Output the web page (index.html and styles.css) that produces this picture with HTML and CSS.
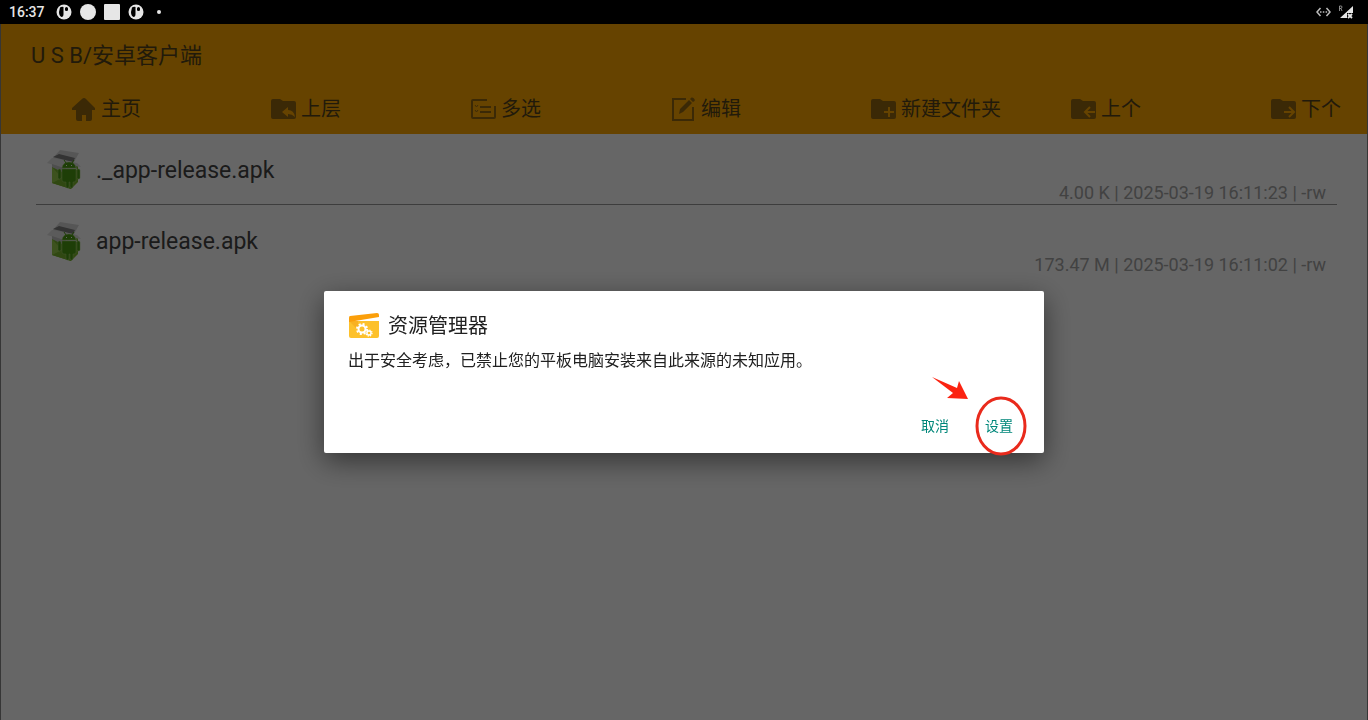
FILE: index.html
```html
<!DOCTYPE html>
<html lang="zh-CN">
<head>
    <meta charset="UTF-8">
    <meta name="viewport" content="width=device-width, initial-scale=1.0">
    <title>资源管理器</title>
    <link rel="stylesheet" href="styles.css">
</head>
<body>
    <!-- Shared icon shapes -->
    <svg class="defs" width="0" height="0">
        <symbol id="folder" viewBox="0 0 25 20">
            <path d="M2 0H9L12 2H23Q25 2 25 4V18Q25 20 23 20H2Q0 20 0 18V2Q0 0 2 0Z"/>
        </symbol>
        <symbol id="notice" viewBox="0 0 16 16">
            <circle cx="8" cy="8" r="7.5" fill="#e6e6e6"/>
            <path d="M4 3.500Q5.500 2.500 7.500 3V10Q7.500 13 5.500 13Q3 12 3 8ZM9 4.500Q9 3 10.500 3Q12 3 12 4.500V6Q12 7 10.500 7Q9 7 9 6Z" fill="#000"/>
        </symbol>
        <symbol id="apk" viewBox="0 0 34 40">
            <path d="M5 17L26 12L31 16V32L24 39L5 33Z" fill="#7bb62c"/>
            <path d="M5 17L24 23V39L5 33Z" fill="#79b52d"/>
            <path d="M5 17L15 28L5 33Z" fill="#99cc4c"/>
            <path d="M5 9L28 13L30 20L22 19L5 17Z" fill="#dedede"/>
            <path d="M5 9L13 0L32 3L27 12Z" fill="#d8d8d8"/>
            <path d="M6 7L12 4L28 8L26 12Z" fill="#808080"/>
            <path d="M5 8L0 13L20 19L25 12Z" fill="#e4e4e4"/>
            <path d="M5 17V14L20 19L17 23Z" fill="#c4c4c4"/>
            <path d="M25 12L30 13L34 17L27 16Z" fill="#dedede"/>
            <g fill="#4b9b12" stroke="#a3cf73" stroke-width=".5">
                <path d="M15 18Q16 12 22 12Q28 12 29 18Z"/>
                <path d="M15 19H29V30Q29 32 27 32H26V36Q26 38 24.500 38Q23 38 23 36V32H22V36Q22 38 20.500 38Q19 38 19 36V32H17Q15 32 15 30Z"/>
                <rect x="11" y="19" width="3" height="10" rx="1.500"/>
                <rect x="30" y="19" width="3" height="10" rx="1.500"/>
            </g>
            <path d="M19 13L17 10M25 13L27 10" stroke="#4b9b12"/>
            <path d="M19 15.500h1M24 15.500h1" stroke="#fff"/>
        </symbol>
    </svg>

    <header class="status-bar">
        <span class="clock">16:37</span>
        <svg width="16" height="16"><use href="#notice"/></svg>
        <svg width="16" height="16"><circle cx="8" cy="8" r="8" fill="#e6e6e6"/></svg>
        <svg width="16" height="16"><rect width="16" height="16" rx="1" fill="#e6e6e6"/></svg>
        <svg width="16" height="16"><use href="#notice"/></svg>
        <svg width="14" height="16"><circle cx="7" cy="8" r="2" fill="#e6e6e6"/></svg>
        <svg class="network" width="15" height="10" viewBox="0 0 15 10" fill="none" stroke="#bbb" stroke-width="1.500">
            <path d="M4.500 1L1 5L4.500 9M10.500 1L14 5L10.500 9M4 5h1.500M6.800 5h1.500M9.600 5h1.500"/>
        </svg>
        <svg width="14" height="14" viewBox="0 0 14 14">
            <path d="M14 1V8H8V13H1Z" fill="#e6e6e6"/>
            <path d="M9 9L13 13M13 9L9 13" stroke="#e6e6e6" stroke-width="1.800"/>
            <path d="M.5 6V1H2Q3 1 3 2T2 3.500H.5M2 3.500L3 6" fill="none" stroke="#aaa" stroke-width=".8"/>
        </svg>
    </header>

    <main class="app">
        <div class="app-bar">
            <h1>U S B/安卓客户端</h1>
            <nav class="toolbar">
                <button type="button">
                    <svg width="25" height="24" viewBox="0 0 25 24"><path d="M13 1Q14 1 15 2L24 11V13H21V22Q21 24 19 24H15V18H11V24H7Q5 24 5 22V13H1V11L11 2Q12 1 13 1Z"/></svg>
                    主页
                </button>
                <button type="button">
                    <svg width="25" height="20" viewBox="0 0 25 20"><use href="#folder"/><path class="cut" d="M17 8V11Q23 11 24 18Q21 15 17 15V18L11 13Z"/></svg>
                    上层
                </button>
                <button type="button">
                    <svg width="25" height="20" viewBox="0 0 25 20"><path class="line" d="M16 1H2Q1 1 1 2V18Q1 19 2 19H23Q24 19 24 18V7M9 8H20M9 13H20"/><path d="M4 6L5.500 8L7 6M4 11L5.500 13L7 11" fill="none" stroke="#9d6b11"/></svg>
                    多选
                </button>
                <button type="button">
                    <svg width="25" height="24" viewBox="0 0 25 24"><path class="line" d="M15 2H2V23H22V10"/><path d="M8 17L9 12L18 3L21 6L12 15ZM19 2L20.500 .5Q21.500 0 23 1.500T23.500 4L22 5Z"/></svg>
                    编辑
                </button>
                <button type="button">
                    <svg width="25" height="20" viewBox="0 0 25 20"><use href="#folder"/><path class="cut-line" d="M18 8V18M13 13H23"/></svg>
                    新建文件夹
                </button>
                <button type="button">
                    <svg width="25" height="20" viewBox="0 0 25 20"><use href="#folder"/><path class="cut-line" d="M19 8L14 13L19 18M14 13H24"/></svg>
                    上个
                </button>
                <button type="button">
                    <svg width="25" height="20" viewBox="0 0 25 20"><use href="#folder"/><path class="cut-line" d="M18 8L23 13L18 18M13 13H23"/></svg>
                    下个
                </button>
            </nav>
        </div>

        <ul class="files">
            <li>
                <svg width="34" height="40"><use href="#apk"/></svg>
                <span class="name">._app-release.apk</span>
                <span class="meta">4.00 K | 2025-03-19 16:11:23 | -rw</span>
            </li>
            <li>
                <svg width="34" height="40"><use href="#apk"/></svg>
                <span class="name">app-release.apk</span>
                <span class="meta">173.47 M | 2025-03-19 16:11:02 | -rw</span>
            </li>
        </ul>
    </main>

    <div class="scrim">
        <section class="dialog" role="dialog" aria-labelledby="dialogTitle">
            <div class="dialog-head">
                <svg width="32" height="26" viewBox="0 0 32 26">
                    <path d="M1 8H31V23Q31 25 29 25H3Q1 25 1 23Z" fill="#fdc12c"/>
                    <path d="M1 8L10 17V8Z" fill="#f8b122"/>
                    <path d="M2 3L29 0Q31 0 31 2V4L1 9V5Q1 3 2 3Z" fill="#fb9f0a"/>
                    <circle cx="14" cy="16" r="3.500" fill="none" stroke="#fff" stroke-width="2"/>
                    <circle cx="14" cy="16" r="5" fill="none" stroke="#fff" stroke-width="2" stroke-dasharray="2 1.930"/>
                    <circle cx="21" cy="20" r="2" fill="none" stroke="#fff" stroke-width="1.300"/>
                    <circle cx="21" cy="20" r="3" fill="none" stroke="#fff" stroke-width="1.300" stroke-dasharray="1.300 1.060"/>
                </svg>
                <h2 id="dialogTitle">资源管理器</h2>
            </div>
            <p>出于安全考虑，已禁止您的平板电脑安装来自此来源的未知应用。</p>
            <div class="actions">
                <button type="button">取消</button>
                <button type="button">设置</button>
            </div>
            <!-- Red marker over the settings button -->
            <svg class="marker" width="103" height="86" viewBox="0 0 103 86">
                <path d="M4 5L29 16L31 9L40 27L19 26L25 21Z" fill="#fb2311"/>
                <ellipse cx="73" cy="54" rx="24" ry="28" fill="none" stroke="#e92a1c" stroke-width="3"/>
            </svg>
        </section>
    </div>
</body>
</html>
```

FILE: styles.css
```css
* {
    box-sizing: border-box;
}

body {
    margin: 0;
    min-height: 100vh;
    display: flex;
    flex-direction: column;
    overflow: hidden;
    font-family: Roboto, "Noto Sans CJK SC", sans-serif;
    color: #444;
}

h1, h2, p, ul {
    margin: 0;
    padding: 0;
    font-weight: 400;
}

button {
    border: 0;
    padding: 0;
    background: none;
    font-family: inherit;
    cursor: pointer;
}

svg {
    flex: none;
}

.defs {
    position: absolute;
}

/* Status bar */
.status-bar {
    height: 24px;
    padding: 0 15px 0 9px;
    display: flex;
    align-items: center;
    gap: 8px;
    background: #000;
    color: #e6e6e6;
}

.clock {
    margin-right: 3px;
    font-size: 14px;
    font-weight: 500;
}

.network {
    margin-left: auto;
}

/* File manager */
.app {
    flex: 1;
    border: 1px solid #888;
    border-width: 0 1px;
    background: #fff;
}

.app-bar {
    height: 110px;
    padding-top: 16px;
    background: #ffa800;
    color: #54431c;
}

.app-bar h1 {
    padding-left: 30px;
    font-size: 22px;
    line-height: 32px;
}

.toolbar {
    display: flex;
    margin-top: 21px;
    padding-left: 70px;
    overflow: hidden;
}

.toolbar button {
    flex: none;
    width: 200px;
    display: flex;
    align-items: center;
    gap: 5px;
    font-size: 20px;
    line-height: 32px;
    white-space: nowrap;
    color: inherit;
}

.toolbar svg {
    fill: #94660f;
}

.toolbar .line {
    fill: none;
    stroke: #94660f;
    stroke-width: 2;
}

.toolbar .cut {
    fill: #ffa800;
}

.toolbar .cut-line {
    fill: none;
    stroke: #ffa800;
    stroke-width: 2;
}

.files {
    padding: 0 30px 0 35px;
    list-style: none;
}

.files li {
    height: 71px;
    padding: 2px 11px 0;
    display: flex;
    align-items: center;
    gap: 15px;
    border-bottom: 1px solid #999;
}

.files li:last-child {
    border-bottom: 0;
}

.name {
    font-size: 23px;
}

.meta {
    margin-left: auto;
    align-self: flex-end;
    font-size: 18px;
    line-height: 22px;
    color: #a5a5a5;
}

/* Dialog */
.scrim {
    position: fixed;
    inset: 24px 0 0;
    display: flex;
    align-items: center;
    justify-content: center;
    background: rgba(0, 0, 0, 0.6);
}

.dialog {
    position: relative;
    width: 720px;
    max-width: 90%;
    padding: 18px 13px 10px 24px;
    background: #fff;
    border-radius: 2px;
    box-shadow: 0 8px 28px rgba(0, 0, 0, 0.5);
    color: #212121;
}

.dialog-head {
    display: flex;
    align-items: center;
    gap: 8px;
}

.dialog h2 {
    font-size: 20px;
    line-height: 34px;
}

.dialog p {
    margin-top: 6px;
    font-size: 16px;
    line-height: 24px;
}

.actions {
    display: flex;
    justify-content: flex-end;
    margin-top: 34px;
}

.actions button {
    width: 64px;
    height: 36px;
    font-size: 14px;
    color: #00877a;
}

.marker {
    position: absolute;
    right: 13px;
    bottom: -5px;
    pointer-events: none;
}
```
